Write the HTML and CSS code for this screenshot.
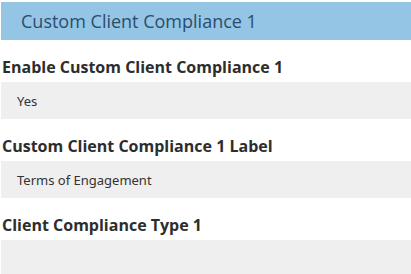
FILE: index.html
```html
<!DOCTYPE html>
<html>
<head>
<meta charset="utf-8">
<link rel="stylesheet" href="styles.css">
</head>
<body>
<div class="panel">
  <div class="panel-title">Custom Client Compliance 1</div>
  <div class="field">
    <div class="field-label">Enable Custom Client Compliance 1</div>
    <div class="field-value">Yes</div>
  </div>
  <div class="field">
    <div class="field-label">Custom Client Compliance 1 Label</div>
    <div class="field-value">Terms of Engagement</div>
  </div>
  <div class="field">
    <div class="field-label">Client Compliance Type 1</div>
    <div class="field-value"></div>
  </div>
</div>
</body>
</html>
```
FILE: styles.css
```css
html, body {
  margin: 0;
  padding: 0;
  background: #ffffff;
}
.panel {
  padding: 2px 0 0 1px;
  font-family: "Open Sans", "Noto Sans", sans-serif;
}
.panel-title {
  height: 38px;
  line-height: 38px;
  background: #94c5e4;
  color: #2a4d6e;
  font-size: 18px;
  padding-left: 20px;
}
.field-label {
  margin: 16px 0 3px 1px;
  line-height: 23px;
  font-size: 16px;
  font-weight: 700;
  color: #2d2d2d;
}
.field:first-of-type .field-label {
  margin-top: 15px;
}
.field-value {
  height: 37px;
  line-height: 39px;
  background: #efefef;
  padding-left: 16px;
  font-family: "Noto Sans", sans-serif;
  font-size: 13px;
  color: #333333;
}
```
